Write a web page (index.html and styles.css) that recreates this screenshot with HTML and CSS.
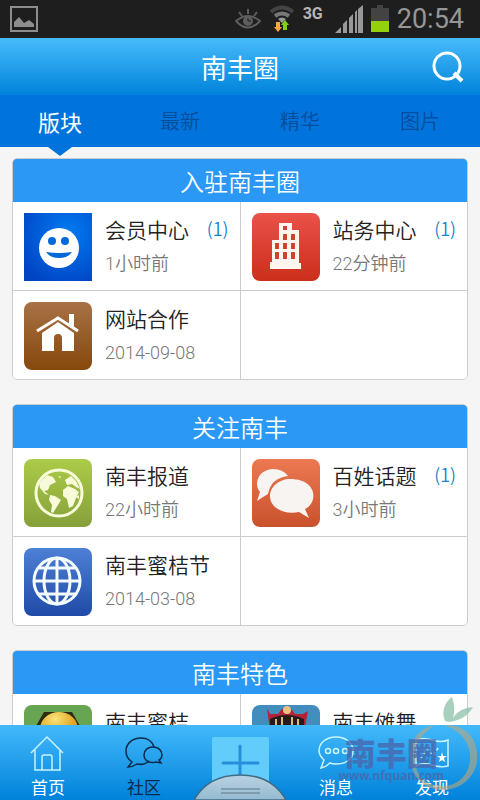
FILE: index.html
```html
<!DOCTYPE html>
<html lang="zh-CN">
<head>
  <meta charset="UTF-8" />
  <title>南丰圈</title>
  <meta name="viewport" content="width=device-width, initial-scale=1.0" />
  <link rel="stylesheet" href="styles.css">
</head>
<body>
  <div class="status">
    <svg class="status-pic" width="28" height="26" viewBox="0 0 28 26">
      <rect x="1" y="1" width="26" height="24" fill="none" stroke="#8d8d8d" stroke-width="2"/>
      <path d="M4 21v-5l5-5 5 6 5-3 5 4v3z" fill="#8d8d8d"/>
    </svg>
    <svg width="26" height="22" viewBox="0 0 26 22" fill="none" stroke="#5e5e5e" stroke-width="2">
      <path d="M1 13q12-10 24 0q-12 13-24 0z"/>
      <path d="M4 4l3 4M13 1v5M22 4l-3 4"/>
      <circle cx="13" cy="13" r="4" fill="#5e5e5e"/>
      <path d="M13 10v3h3" stroke="#1e1e1e" stroke-width="1"/>
    </svg>
    <svg width="26" height="28" viewBox="0 0 26 28" fill="none" stroke-width="4">
      <path d="M2 7q11-9 22 0" stroke="#444"/>
      <path d="M6 11q7-5 14 0" stroke="#777"/>
      <path d="M9 14q4-3 8 0l-4 4z" fill="#999"/>
      <path d="M7 17h4v5h2l-4 5-4-5h2z" fill="#ffa53e"/>
      <path d="M14 25h4v-5h2l-4-5-4 5h2z" fill="#83d01c"/>
    </svg>
    <span class="net">3G</span>
    <svg width="28" height="28" viewBox="0 0 28 28" fill="#999">
      <path d="M0 28l6-6v6zM8 28v-9l4-4v13zM14 28V13l4-4v19zM20 28V7l2-2v23zM23 28V4l5-4v28z"/>
    </svg>
    <svg width="18" height="28" viewBox="0 0 18 28">
      <path d="M0 3h6V0h6v3h6v13H0z" fill="#434343"/>
      <path d="M0 16h18v11H0z" fill="#95d10b"/>
    </svg>
    <span class="time">20:54</span>
  </div>

  <header class="header">
    <h1>南丰圈</h1>
    <button class="search" aria-label="搜索">
      <svg width="32" height="32" viewBox="0 0 32 32" fill="none" stroke="#fff" stroke-width="3">
        <circle cx="15" cy="15" r="13"/>
        <path d="M22 22l8 8" stroke-width="4"/>
      </svg>
    </button>
  </header>

  <nav class="tabs">
    <a href="#bankuai" class="active">版块</a>
    <a href="#zuixin">最新</a>
    <a href="#jinghua">精华</a>
    <a href="#tupian">图片</a>
  </nav>

  <main class="content">
    <section class="card">
      <h2>入驻南丰圈</h2>
      <div class="grid">
        <a href="#member" class="item">
          <svg class="icon square" viewBox="0 0 68 68">
            <defs><radialGradient id="blue" cx=".65" cy=".3" r=".8"><stop stop-color="#007cf2"/><stop offset="1" stop-color="#0044c4"/></radialGradient></defs>
            <rect width="68" height="68" fill="url(#blue)"/>
            <circle cx="35" cy="35" r="20" fill="#fff"/>
            <circle cx="28" cy="28" r="4" fill="#0068d8"/>
            <circle cx="41" cy="28" r="4" fill="#0068d8"/>
            <path d="M22 39q13 2 26 0-4 6-13 6t-13-6z" fill="#0068d8"/>
          </svg>
          <div class="text">
            <h3>会员中心</h3>
            <p>1小时前</p>
          </div>
          <span class="count">(1)</span>
        </a>
        <a href="#site" class="item">
          <svg class="icon" viewBox="0 0 68 68">
            <defs><linearGradient id="red" x2="0" y2="1"><stop stop-color="#ea5148"/><stop offset="1" stop-color="#cc2e1b"/></linearGradient></defs>
            <rect width="68" height="68" fill="url(#red)"/>
            <path d="M27 10h13v7h7v33h2v6H18v-7h2V27h7z" fill="#fff5ef"/>
            <path d="M31 13h4v4h-4zM31 21h4v6h-4zM39 21h4v6h-4zM23 30h4v6h-4zM31 30h4v6h-4zM39 30h4v6h-4zM23 39h4v7h-4zM31 39h4v7h-4zM39 39h4v7h-4z" fill="#c8452f"/>
          </svg>
          <div class="text">
            <h3>站务中心</h3>
            <p>22分钟前</p>
          </div>
          <span class="count">(1)</span>
        </a>
        <a href="#cooperate" class="item">
          <svg class="icon" viewBox="0 0 68 68">
            <defs><linearGradient id="brown" x2="0" y2="1"><stop stop-color="#a87245"/><stop offset="1" stop-color="#86480c"/></linearGradient></defs>
            <rect width="68" height="68" fill="url(#brown)"/>
            <path d="M13 29l21-13 20 13" fill="none" stroke="#fff" stroke-width="3"/>
            <path d="M45 12h5v14l-5-3z" fill="#fff"/>
            <path d="M18 31l16-11 16 11v18H38V36q0-4-4-4t-4 4v13H18z" fill="#fff"/>
          </svg>
          <div class="text">
            <h3>网站合作</h3>
            <p>2014-09-08</p>
          </div>
        </a>
        <div class="item"></div>
      </div>
    </section>

    <section class="card">
      <h2>关注南丰</h2>
      <div class="grid">
        <a href="#news" class="item">
          <svg class="icon" viewBox="0 0 68 68">
            <defs><linearGradient id="green" x2="0" y2="1"><stop stop-color="#accb48"/><stop offset="1" stop-color="#86a03a"/></linearGradient></defs>
            <rect width="68" height="68" fill="url(#green)"/>
            <circle cx="35" cy="34" r="23" fill="none" stroke="#f7fbd9" stroke-width="3"/>
            <path d="M15 24l8-8 6 2 3 5-6 3-2 5-4 1 5 4-4-1-5-6zM37 19l-3-1 2-1zM26 36l5 1 6 4-3 5-5 8-2-1 1-7-3-5zM39 31l5-4 7 3 4 3-3 6-3 8-4 2-2-9-4-3zM41 21l6-4 5 5 4 8-4-2-4-3-5 1zM52 38l3-2v4z" fill="#f7fbd9"/>
          </svg>
          <div class="text">
            <h3>南丰报道</h3>
            <p>22小时前</p>
          </div>
        </a>
        <a href="#topic" class="item">
          <svg class="icon" viewBox="0 0 68 68">
            <defs><linearGradient id="orange" x2="0" y2="1"><stop stop-color="#ec7952"/><stop offset="1" stop-color="#c9522d"/></linearGradient></defs>
            <rect width="68" height="68" fill="url(#orange)"/>
            <path d="M8 33C2 26 5 11 21 10q10 0 15 7-17 2-20 18l-5 3-6 4z" fill="#f7f4f2"/>
            <path d="M38 20c28 0 28 24 15 30l4 9-10-6c-15 3-29-4-29-16 0-9 9-17 20-17z" fill="#f7f4f2"/>
          </svg>
          <div class="text">
            <h3>百姓话题</h3>
            <p>3小时前</p>
          </div>
          <span class="count">(1)</span>
        </a>
        <a href="#festival" class="item">
          <svg class="icon" viewBox="0 0 68 68">
            <defs><linearGradient id="globe" x2="0" y2="1"><stop stop-color="#4e80d6"/><stop offset="1" stop-color="#1f4aa7"/></linearGradient></defs>
            <rect width="68" height="68" fill="url(#globe)"/>
            <g fill="none" stroke="#f3fbff" stroke-width="3">
              <circle cx="33" cy="33" r="23"/>
              <ellipse cx="33" cy="33" rx="13" ry="23"/>
              <path d="M33 10v46M10 33h46M14 20h38M14 46h38"/>
            </g>
          </svg>
          <div class="text">
            <h3>南丰蜜桔节</h3>
            <p>2014-03-08</p>
          </div>
        </a>
        <div class="item"></div>
      </div>
    </section>

    <section class="card">
      <h2>南丰特色</h2>
      <div class="grid">
        <a href="#orange" class="item">
          <svg class="icon" viewBox="0 0 68 68">
            <defs><radialGradient id="fruit" cx=".4" cy=".2" r=".6"><stop stop-color="#fbe27a"/><stop offset="1" stop-color="#d99a10"/></radialGradient></defs>
            <rect width="68" height="68" fill="#68a552"/>
            <path d="M20 7h28l8 14v40H12V21z" fill="#2c2a10"/>
            <ellipse cx="35" cy="24" rx="19" ry="17" fill="url(#fruit)"/>
          </svg>
          <div class="text">
            <h3>南丰蜜桔</h3>
          </div>
        </a>
        <a href="#nuo" class="item">
          <svg class="icon" viewBox="0 0 68 68">
            <rect width="68" height="68" fill="#418dbd"/>
            <path d="M15 3l3 6h8l4-5h9l4 5h8l5-3-3 16v30H17V18z" fill="#b32334"/>
            <path d="M18 14q17-8 34 0v14H18z" fill="#28191a"/>
            <path d="M24 14v7M30 12v9M40 12v9M46 14v7" stroke="#d8bd78" stroke-width="2"/>
            <circle cx="35" cy="5" r="4" fill="#edc184"/>
          </svg>
          <div class="text">
            <h3>南丰傩舞</h3>
          </div>
        </a>
      </div>
    </section>
  </main>

  <footer class="bottom">
    <nav class="menu">
      <a href="#home">
        <svg width="36" height="36" viewBox="0 0 36 36" fill="none" stroke="#c9f4ff" stroke-width="1.5">
          <path d="M1 18L17 2l16 16M5 15v20h25V15M12 35V22q0-2 2-2h6q2 0 2 2v13"/>
        </svg>
        <span>首页</span>
      </a>
      <a href="#community" class="dark">
        <svg width="38" height="36" viewBox="0 0 38 36" fill="none" stroke="#0a2b4c" stroke-width="1.5">
          <path d="M29 12C27 6 22 3 16 3 7 3 1 9 1 16c0 5 3 9 6 11l-4 5c4 0 6-1 9-3 5 1 9 0 12-3"/>
          <path d="M28 12c5 0 9 3 9 8 0 2-1 4-3 5l2 3-5-1c-7 2-12-2-12-7s4-8 9-8z"/>
        </svg>
        <span>社区</span>
      </a>
      <a href="#post" class="add" aria-label="发帖">
        <svg width="57" height="57" viewBox="0 0 57 57">
          <rect width="57" height="57" rx="2" fill="#62ccfa"/>
          <path d="M11 26h35M28 9v36" stroke="#258fdd" stroke-width="3" stroke-linecap="round"/>
        </svg>
      </a>
      <a href="#message">
        <svg width="36" height="36" viewBox="0 0 36 36" fill="none" stroke="#c9f4ff" stroke-width="1.5">
          <path d="M18 2c10 0 17 6 17 14S28 29 18 29q-4 0-6-1-4 4-9 5l3-8c-3-3-5-6-5-9C1 8 8 2 18 2z"/>
          <circle cx="10" cy="16" r="2.5"/>
          <circle cx="18" cy="16" r="2.5"/>
          <circle cx="27" cy="16" r="2.5"/>
        </svg>
        <span>消息</span>
      </a>
      <a href="#discover">
        <svg width="36" height="36" viewBox="0 0 36 36" fill="none" stroke="#c9f4ff" stroke-width="1.5">
          <path d="M2 5q7-3 16 0 9 3 16 0v26q-7 2-16-1-9-3-16 1z"/>
          <path d="M7 23l6-9 6 6 6-8" stroke-dasharray="3 2"/>
          <path d="M28 17l1 4h4l-3 2 1 4-3-2-3 2 1-4-3-2h4z" fill="#fff" stroke="none"/>
        </svg>
        <span>发现</span>
      </a>
    </nav>
    <svg class="handle" width="92" height="26" viewBox="0 0 92 26">
      <defs><linearGradient id="grip" x2="0" y2="1"><stop stop-color="#bad2e1"/><stop offset="1" stop-color="#94b9d0"/></linearGradient></defs>
      <path d="M0 26Q14 1 46 1t46 25z" fill="url(#grip)" stroke="#3f6c88" stroke-width="1.5"/>
      <path d="M27 15h39M27 19h39" stroke="#7190a3" stroke-width="1.5"/>
    </svg>
    <div class="mark">
      <svg width="72" height="106" viewBox="0 0 72 106">
        <path d="M37 27C33 17 37 8 44 3q4 12 1 21 6-10 20-11-7 13-24 15z" fill="#8cc0a5" opacity=".75"/>
        <path d="M27 31C9 34 0 50 2 65c2 20 17 32 34 31 20-1 34-17 33-33C70 45 58 30 36 31q20 7 25 24c5 20-8 37-26 37C16 92 7 80 7 65c0-16 7-26 20-34z" fill="#bda779" opacity=".6"/>
      </svg>
      <div class="mark-text">
        <strong>南丰圈</strong>
        <span>www.nfquan.com</span>
      </div>
    </div>
  </footer>
</body>
</html>
```

FILE: styles.css
```css
* {
  box-sizing: border-box;
}
body {
  margin: 0;
  height: 100vh;
  display: flex;
  flex-direction: column;
  overflow: hidden;
  font-family: 'Noto Sans CJK SC', sans-serif;
  font-weight: 350;
  background: #f5f5f5;
}
h1, h2, h3, p {
  margin: 0;
  font-weight: inherit;
}
a {
  color: inherit;
  text-decoration: none;
}
svg {
  display: block;
  flex-shrink: 0;
}
.status {
  display: flex;
  align-items: center;
  gap: 8px;
  height: 38px;
  flex-shrink: 0;
  padding: 0 16px 0 10px;
  background: #1e1e1e;
  font-family: Roboto, sans-serif;
}
.status-pic {
  margin-right: auto;
}
.net {
  align-self: flex-start;
  margin-right: 4px;
  padding-top: 4px;
  font-size: 16px;
  font-weight: bold;
  color: #b5b5b5;
}
.time {
  font-size: 27px;
  font-weight: 400;
  color: #969696;
}
.header {
  display: grid;
  grid-template-columns: 1fr auto 1fr;
  align-items: center;
  height: 57px;
  flex-shrink: 0;
  padding: 0 16px;
  background: linear-gradient(#47bbfa, #0083db);
}
.header h1 {
  grid-column: 2;
  font-size: 26px;
  font-weight: 400;
  line-height: 40px;
  color: #fff;
}
.search {
  justify-self: end;
  padding: 0;
  border: none;
  background: none;
  cursor: pointer;
}
.tabs {
  display: flex;
  height: 52px;
  flex-shrink: 0;
  background: #0074dc;
  font-size: 20px;
  line-height: 52px;
  text-align: center;
  color: #064d9b;
}
.tabs a {
  flex: 1;
  position: relative;
}
.tabs .active {
  font-size: 22px;
  font-weight: 400;
  color: #fff;
}
.tabs .active::after {
  content: "";
  position: absolute;
  left: 50%;
  top: 100%;
  margin-left: -12px;
  border: 12px solid transparent;
  border-top: 9px solid #0074dc;
  border-bottom: none;
}
.content {
  flex: 1;
  min-height: 0;
  overflow: hidden;
  padding: 11px 12px;
}
.card {
  margin-bottom: 24px;
  overflow: hidden;
  border: 1px solid #ccc;
  border-radius: 5px;
  background: #fff;
}
.card h2 {
  height: 43px;
  background: #2b98f5;
  font-size: 24px;
  line-height: 43px;
  text-align: center;
  color: #fff;
}
.grid {
  display: grid;
  grid-template-columns: 1fr 1fr;
  gap: 1px;
  background: #ccc;
}
.item {
  display: flex;
  height: 88px;
  padding: 11px;
  background: #fff;
}
.icon {
  width: 68px;
  height: 68px;
  margin-right: 13px;
  border-radius: 8px;
}
.square {
  border-radius: 0;
}
.text {
  flex: 1;
  white-space: nowrap;
}
.text h3 {
  font-size: 21px;
  line-height: 32px;
  color: #222;
}
.text p {
  font-family: Roboto, 'Noto Sans CJK SC', sans-serif;
  font-size: 18px;
  line-height: 38px;
  color: #777;
}
.count {
  font-size: 18px;
  line-height: 30px;
  color: #1683cb;
}
.bottom {
  position: relative;
  height: 75px;
  flex-shrink: 0;
  background: linear-gradient(#43b9fb, #0082da);
}
.menu {
  display: flex;
  height: 100%;
  font-size: 17px;
  font-weight: 400;
  line-height: 24px;
  color: #fff;
}
.menu a {
  flex: 1;
  display: flex;
  flex-direction: column;
  align-items: center;
  gap: 4px;
  padding-top: 10px;
}
.menu .add {
  padding-top: 12px;
}
.menu .dark {
  color: #0a2b4c;
}
.handle {
  position: absolute;
  left: 50%;
  bottom: 0;
  margin-left: -46px;
}
.mark {
  position: absolute;
  right: 0;
  bottom: 0;
  pointer-events: none;
}
.mark-text {
  position: absolute;
  right: 36px;
  bottom: 18px;
  text-align: center;
  color: #4968ae;
  opacity: 0.8;
}
.mark strong {
  display: block;
  font-size: 31px;
  font-weight: 900;
  line-height: 36px;
  white-space: nowrap;
}
.mark span {
  display: block;
  font-family: 'Noto Sans', sans-serif;
  font-size: 12px;
  font-weight: bold;
  line-height: 12px;
}
```
